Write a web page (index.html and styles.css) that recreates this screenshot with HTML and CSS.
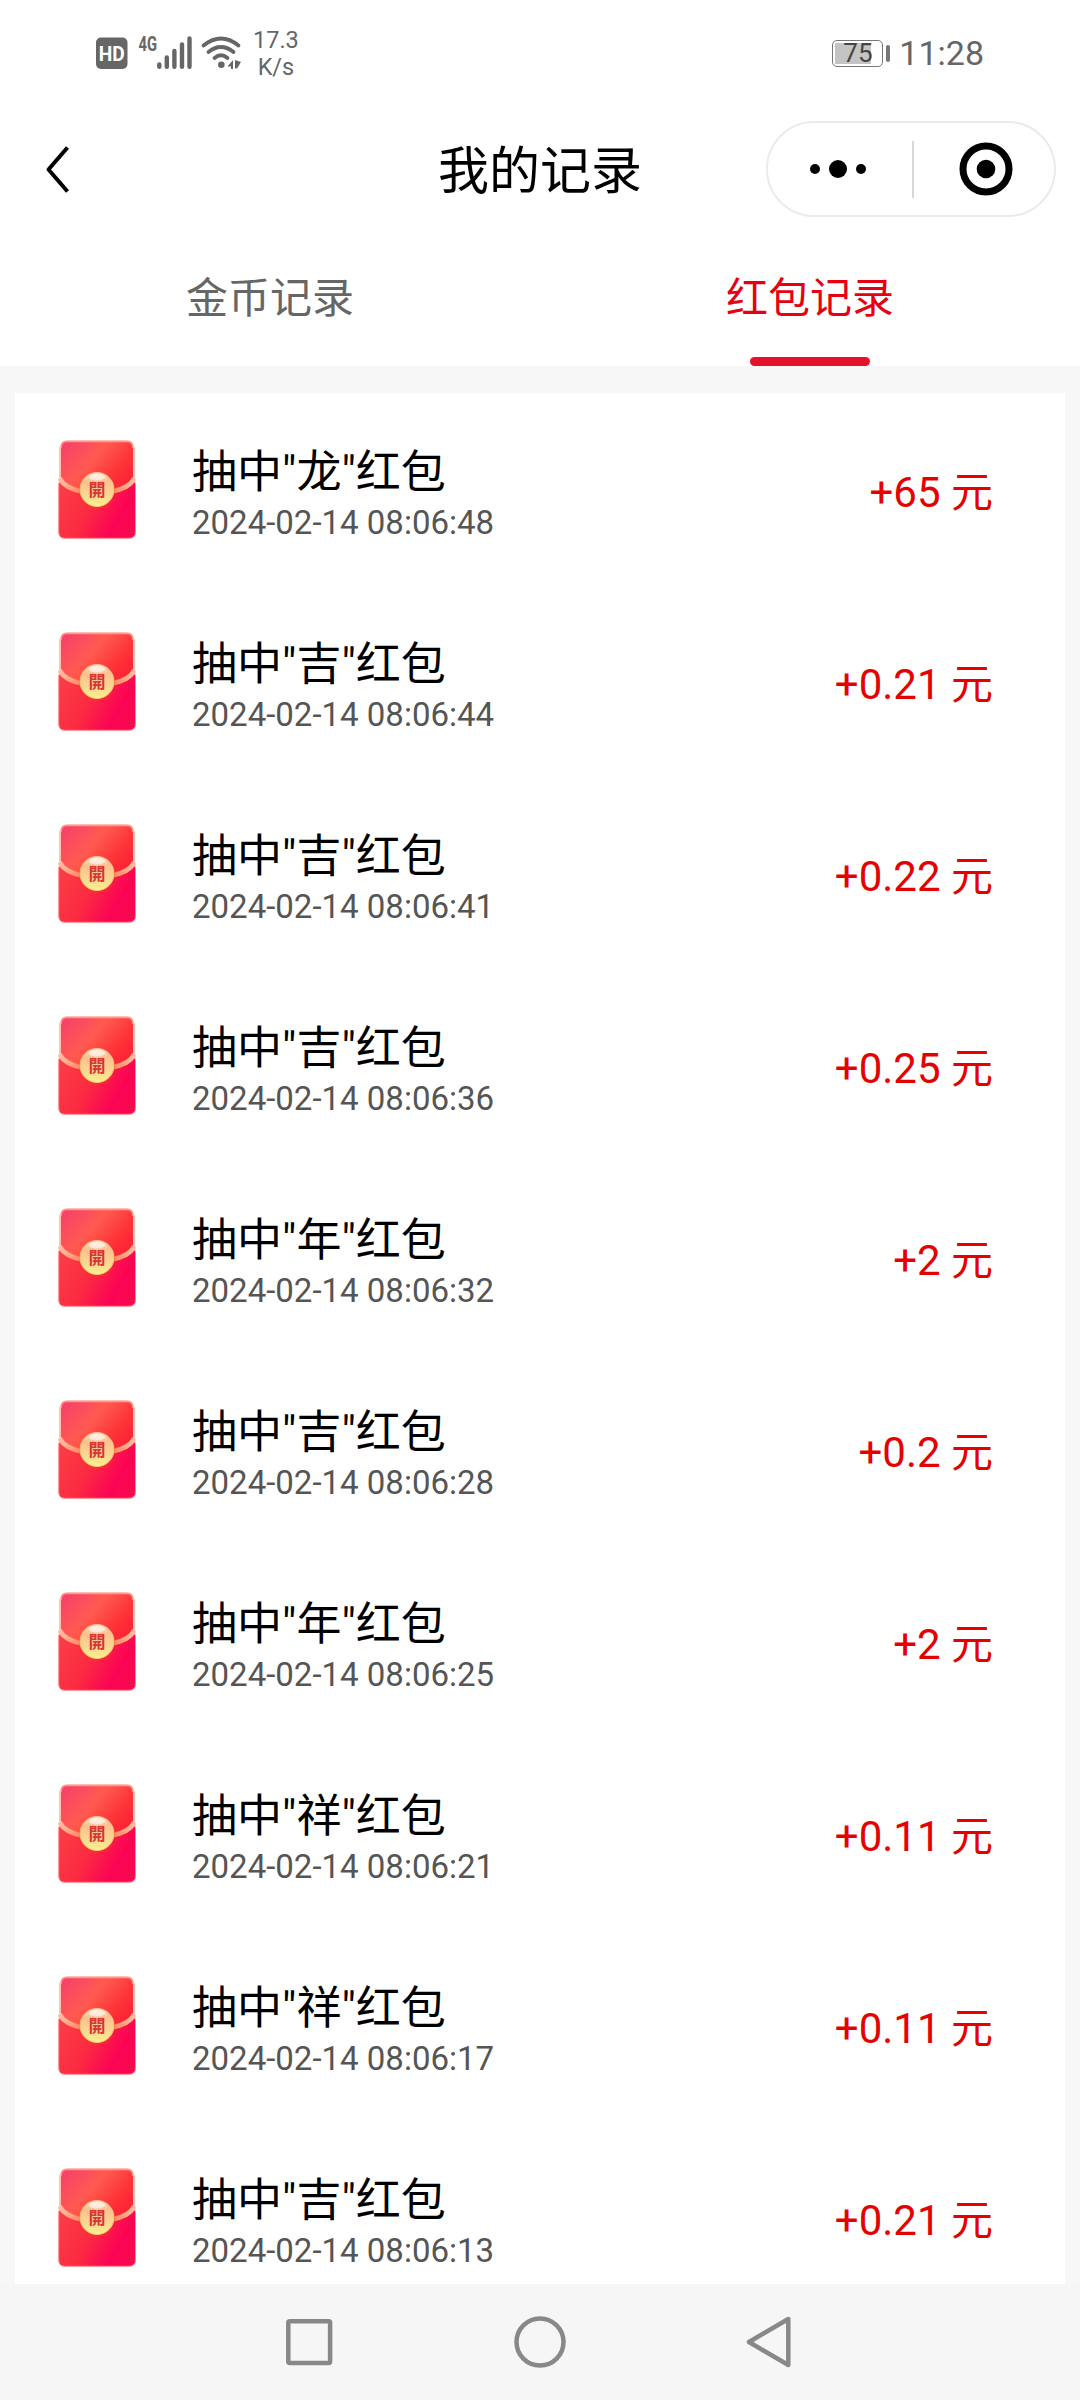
FILE: index.html
```html
<!DOCTYPE html>
<html lang="zh-CN">
<head>
<meta charset="utf-8">
<title>我的记录</title>
<link rel="stylesheet" href="styles.css">
</head>
<body>
<svg class="defs" width="0" height="0">
  <defs>
    <linearGradient id="body" x1="0" y1="0.2" x2="1" y2="0.9"><stop offset="0.1" stop-color="#fb4046"/><stop offset="0.5" stop-color="#fc2a42"/><stop offset="0.8" stop-color="#fb0354"/><stop offset="1" stop-color="#f80a50"/></linearGradient>
    <linearGradient id="flap" x1="0" y1="0.1" x2="1" y2="0.7"><stop offset="0" stop-color="#f8406a"/><stop offset="0.45" stop-color="#ff5a50"/><stop offset="0.8" stop-color="#fe3238"/><stop offset="1" stop-color="#fb2436"/></linearGradient>
    <linearGradient id="trim" gradientUnits="userSpaceOnUse" x1="0" y1="0" x2="78" y2="0"><stop offset="0" stop-color="#ffc4a8"/><stop offset="0.28" stop-color="#ff8a62"/><stop offset="0.72" stop-color="#ff8a5c"/><stop offset="1" stop-color="#ffc4a4"/></linearGradient>
    <linearGradient id="coin" x1="0" y1="0" x2="0" y2="1"><stop offset="0" stop-color="#ffe6c8"/><stop offset="0.25" stop-color="#fdc08c"/><stop offset="0.65" stop-color="#fbd690"/><stop offset="1" stop-color="#fff08c"/></linearGradient>
    <symbol id="packet" viewBox="0 0 78 99">
      <path d="M3 7Q3 1 9 1H69Q75 1 75 7V38L77.500 44V92Q77.500 98.300 71 98.300H7Q0.700 98.300 0.700 92V44L3 38Z" fill="url(#body)" stroke="#ff8f92" stroke-width="1"/>
      <path d="M3 7Q3 1 9 1H69Q75 1 75 7V38C66 54 12 54 3 38Z" fill="url(#flap)"/>
      <path d="M3 8Q3 1.500 9 1.500H69Q75 1.500 75 8" fill="none" stroke="#ff9a86" stroke-width="1.400"/>
      <path d="M2 7V38M76 7V38" stroke="#ffc4ac" stroke-width="2"/>
      <path d="M1.500 38Q6 48 24 51.500M76.500 38Q72 48 54 51.500" fill="none" stroke="url(#trim)" stroke-width="4.800"/>
      <circle cx="39" cy="51" r="18" fill="#e83a2c" opacity="0.45"/>
      <circle cx="39" cy="49.500" r="17" fill="url(#coin)" stroke="#ffc078" stroke-width="1"/>
      <ellipse cx="39" cy="37" rx="8" ry="3.500" fill="#fff" opacity="0.6"/>
      <text class="coin-text" x="39" y="56" text-anchor="middle">開</text>
    </symbol>
  </defs>
</svg>

<div class="screen">
  <header class="status">
    <svg class="status-icons" width="146" height="36" viewBox="95 35 146 36">
      <rect x="96" y="37.500" width="31.500" height="31.500" rx="5" fill="#666"/>
      <text class="hd" x="111.700" y="60.500" text-anchor="middle" textLength="26" lengthAdjust="spacingAndGlyphs">HD</text>
      <text class="net" x="138.500" y="51" textLength="18.500" lengthAdjust="spacingAndGlyphs">4G</text>
      <g stroke="#666" stroke-width="4.400" stroke-linecap="round"><path d="M159.300 64.500V66.800M166.800 57.500V66.800M174.400 51V66.800M182 44.500V66.800M189.500 38.500V66.800"/></g>
      <g fill="none" stroke="#666" stroke-width="3.800" stroke-linecap="round">
        <path d="M203.500 45.500Q221 31.500 238.500 45.500"/>
        <path d="M208.500 52Q221 42 233.500 52"/>
        <path d="M214.500 58Q221 52.500 227.500 58"/>
      </g>
      <circle cx="221.300" cy="64.800" r="3.300" fill="#666"/>
      <path d="M233 60V69H231V66.500H227.500ZM235 60L241 62L237 68.500H235Z" fill="#666"/>
    </svg>
    <div class="speed"><span>17.3</span><span>K/s</span></div>
    <div class="status-right">
      <div class="battery"><div class="battery-fill">75</div></div>
      <div class="battery-nub"></div>
      <div class="clock">11:28</div>
    </div>
  </header>

  <nav class="titlebar">
    <svg class="back" width="30" height="50" viewBox="0 0 30 50"><path d="M24.500 3.500L5.500 25.500L24.500 47.500" fill="none" stroke="#000" stroke-width="4" stroke-linejoin="round"/></svg>
    <h1 class="title">我的记录</h1>
    <div class="capsule">
      <svg width="58" height="20" viewBox="0 0 58 20"><circle cx="6" cy="10" r="5"/><circle cx="29" cy="10" r="9"/><circle cx="52" cy="10" r="5"/></svg>
      <i class="capsule-line"></i>
      <svg width="54" height="54" viewBox="0 0 54 54"><circle cx="27" cy="27" r="23" fill="none" stroke="#000" stroke-width="7"/><circle cx="27" cy="27" r="9.300"/></svg>
    </div>
  </nav>

  <div class="tabs">
    <div class="tab">金币记录</div>
    <div class="tab active">红包记录</div>
  </div>

  <main class="content">
    <ul class="list">
      <li class="row"><svg class="packet"><use href="#packet"/></svg><div class="info"><div class="name">抽中"龙"红包</div><div class="time">2024-02-14 08:06:48</div></div><div class="amount">+65 元</div></li>
      <li class="row"><svg class="packet"><use href="#packet"/></svg><div class="info"><div class="name">抽中"吉"红包</div><div class="time">2024-02-14 08:06:44</div></div><div class="amount">+0.21 元</div></li>
      <li class="row"><svg class="packet"><use href="#packet"/></svg><div class="info"><div class="name">抽中"吉"红包</div><div class="time">2024-02-14 08:06:41</div></div><div class="amount">+0.22 元</div></li>
      <li class="row"><svg class="packet"><use href="#packet"/></svg><div class="info"><div class="name">抽中"吉"红包</div><div class="time">2024-02-14 08:06:36</div></div><div class="amount">+0.25 元</div></li>
      <li class="row"><svg class="packet"><use href="#packet"/></svg><div class="info"><div class="name">抽中"年"红包</div><div class="time">2024-02-14 08:06:32</div></div><div class="amount">+2 元</div></li>
      <li class="row"><svg class="packet"><use href="#packet"/></svg><div class="info"><div class="name">抽中"吉"红包</div><div class="time">2024-02-14 08:06:28</div></div><div class="amount">+0.2 元</div></li>
      <li class="row"><svg class="packet"><use href="#packet"/></svg><div class="info"><div class="name">抽中"年"红包</div><div class="time">2024-02-14 08:06:25</div></div><div class="amount">+2 元</div></li>
      <li class="row"><svg class="packet"><use href="#packet"/></svg><div class="info"><div class="name">抽中"祥"红包</div><div class="time">2024-02-14 08:06:21</div></div><div class="amount">+0.11 元</div></li>
      <li class="row"><svg class="packet"><use href="#packet"/></svg><div class="info"><div class="name">抽中"祥"红包</div><div class="time">2024-02-14 08:06:17</div></div><div class="amount">+0.11 元</div></li>
      <li class="row"><svg class="packet"><use href="#packet"/></svg><div class="info"><div class="name">抽中"吉"红包</div><div class="time">2024-02-14 08:06:13</div></div><div class="amount">+0.21 元</div></li>
    </ul>
  </main>

  <footer class="navbar">
    <svg width="54" height="54" viewBox="0 0 54 54"><rect x="6.300" y="6.300" width="41.800" height="41.800" rx="1.500"/></svg>
    <svg width="54" height="54" viewBox="0 0 54 54"><circle cx="27" cy="27" r="23.500"/></svg>
    <svg width="54" height="54" viewBox="0 0 54 54"><path d="M5 27L44.300 4V50Z"/></svg>
  </footer>
</div>
</body>
</html>
```
FILE: styles.css
```css
* {
  box-sizing: border-box;
}

body {
  margin: 0;
  background: #fff;
  font-family: Roboto, "Noto Sans CJK SC", sans-serif;
}

.defs {
  display: block;
}

.screen {
  display: flex;
  flex-direction: column;
  width: 1080px;
  height: 2400px;
  overflow: hidden;
}

.status {
  display: flex;
  align-items: center;
  height: 106px;
  padding: 0 96px 0 95px;
  color: #666;
}

.status-icons {
  overflow: visible;
}

.hd {
  font: 700 21px/1 Roboto, sans-serif;
  fill: #fff;
}

.net {
  font: 700 20px/1 Roboto, sans-serif;
  fill: #666;
}

.speed {
  display: flex;
  flex-direction: column;
  align-items: center;
  margin-left: 12px;
  padding-top: 1px;
  font-size: 23.5px;
  line-height: 27px;
}

.status-right {
  display: flex;
  align-items: center;
  margin-left: auto;
}

.battery {
  width: 51px;
  height: 27px;
  padding: 2px;
  border: 1.500px solid #777;
  border-radius: 5px;
}

.battery-fill {
  width: 36px;
  height: 21px;
  padding-left: 8px;
  background: #c4c4c4;
  color: #444;
  font-size: 26px;
  line-height: 21px;
}

.battery-nub {
  width: 4px;
  height: 17px;
  margin: 0 9px 0 3px;
  border-radius: 2px;
  background: #777;
}

.clock {
  font-size: 34px;
  line-height: 40px;
}

.titlebar {
  display: grid;
  grid-template-columns: 1fr auto 1fr;
  align-items: center;
  height: 126px;
  padding: 0 24px 0 43px;
}

.back {
  display: block;
}

.title {
  margin: 0 0 0 -19px;
  padding-top: 6px;
  font-size: 51px;
  font-weight: 400;
  line-height: 70px;
}

.capsule {
  display: flex;
  align-items: center;
  justify-content: space-between;
  justify-self: end;
  width: 290px;
  height: 96px;
  padding: 0 41px;
  border: 2px solid #ebebeb;
  border-radius: 48px;
}

.capsule-line {
  width: 2px;
  height: 57px;
  background: #d8d8d8;
}

.tabs {
  display: flex;
  height: 134px;
}

.tab {
  display: flex;
  flex: 1;
  flex-direction: column;
  align-items: center;
  padding-top: 37px;
  color: #666;
  font-size: 42px;
  line-height: 60px;
}

.tab.active {
  color: #e60012;
}

.tab.active::after {
  width: 120px;
  height: 9px;
  margin-top: 28px;
  border-radius: 5px;
  background: #e6112a;
  content: "";
}

.content {
  height: 1918px;
  padding: 27px 15px 0;
  overflow: hidden;
  background: #f7f7f7;
}

.list {
  margin: 0;
  padding: 0;
  background: #fff;
  list-style: none;
}

.row {
  display: flex;
  align-items: center;
  height: 192px;
  padding: 0 72px 0 43px;
}

.packet {
  width: 78px;
  height: 99px;
}

.coin-text {
  font: 700 17px "Noto Sans CJK TC", sans-serif;
  fill: #d93436;
}

.info {
  margin-left: 56px;
  padding-top: 13px;
}

.name {
  color: #000;
  font-size: 45px;
  line-height: 54px;
}

.time {
  color: #555;
  font-size: 33px;
  line-height: 45px;
}

.amount {
  margin-left: auto;
  padding-top: 7px;
  color: #e60000;
  font-size: 42px;
  line-height: 60px;
}

.navbar {
  display: flex;
  justify-content: center;
  gap: 177px;
  height: 116px;
  padding-top: 31px;
  background: #f6f6f6;
}

.navbar svg {
  fill: none;
  stroke: #888;
  stroke-width: 4.500;
  stroke-linejoin: round;
}
```
